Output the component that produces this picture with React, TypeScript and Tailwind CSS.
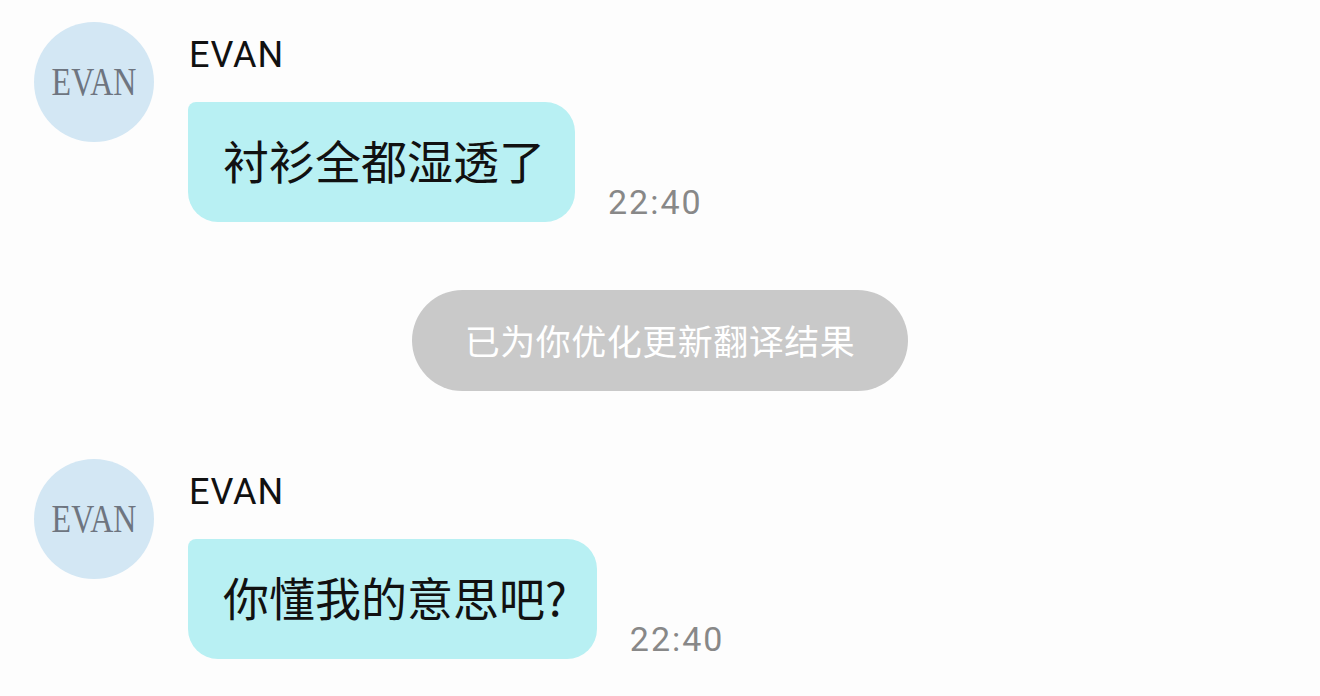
import { memo } from 'react';

type Msg = { text: string; time: string };

const Avatar = () => (
  <div className="w-[120px] h-[120px] shrink-0 rounded-full bg-[#d3e7f4] flex items-center justify-center">
    <span className="text-[40px] leading-none text-[#6e7580] scale-x-80 font-['Liberation_Serif',serif]">EVAN</span>
  </div>
);

const MessageRow = ({ text, time }: Msg) => (
  <div className="flex">
    <Avatar />
    <div className="ml-[34px] flex flex-col">
      <div className="pt-[15px] pl-[1px] text-[36px] leading-[36px] tracking-[1px] text-[#111] font-['Roboto',sans-serif]">EVAN</div>
      <div className="mt-[29px] flex items-end">
        <div className="h-[120px] flex items-center pb-[5px] pl-[35px] pr-[30px] bg-[#b8f0f3] rounded-[30px] rounded-tl-[8px] text-[46px] text-[#111] font-['Noto_Sans_CJK_SC',sans-serif]">
          {text}
        </div>
        <div className="ml-[33px] text-[34px] leading-[40px] tracking-[2px] text-[#888] font-['Roboto',sans-serif]">{time}</div>
      </div>
    </div>
  </div>
);

const App = memo(() => {
  return (
    <div className="w-[1320px] h-[696px] overflow-hidden bg-[#fdfdfd] pt-[22px] pl-[34px]">
      <MessageRow text="衬衫全都湿透了" time="22:40" />

      {/* system notice */}
      <div className="mt-[68px] mr-[34px] flex justify-center">
        <div className="h-[101px] px-[53px] flex items-center rounded-full bg-[#c9c9c9] text-white text-[35px] tracking-[0.5px] font-['Noto_Sans_CJK_SC',sans-serif]">
          已为你优化更新翻译结果
        </div>
      </div>

      <div className="mt-[68px]">
        <MessageRow text="你懂我的意思吧?" time="22:40" />
      </div>
    </div>
  );
});

App.displayName = 'App';

export default App;
